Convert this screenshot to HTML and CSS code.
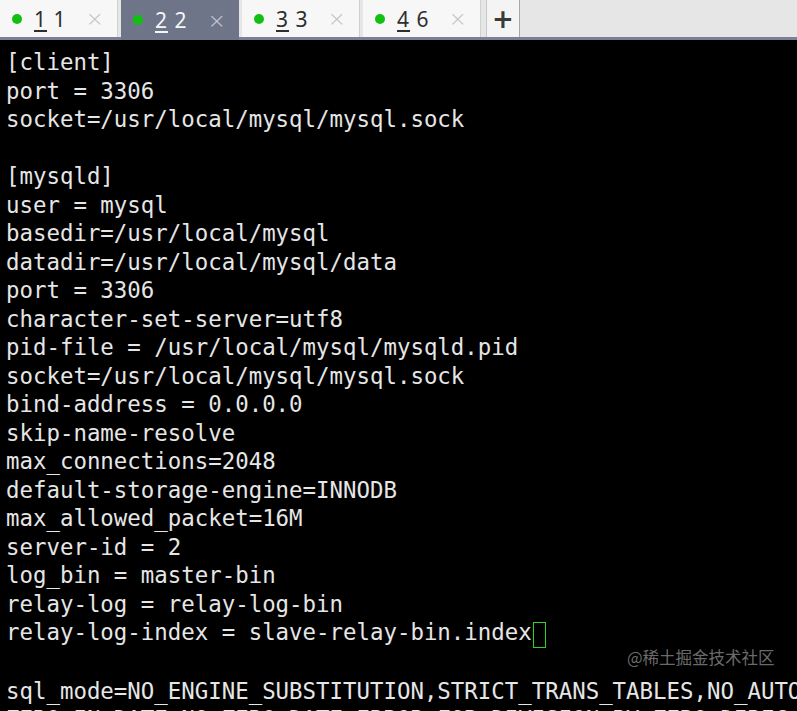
FILE: index.html
```html
<!DOCTYPE html>
<html>
<head>
<meta charset="utf-8">
<link rel="stylesheet" href="styles.css">
</head>
<body>
<div class="tabbar">
  <div class="tab"><span class="dot"></span><span class="label"><u>1</u> 1</span><span class="close">×</span></div>
  <div class="tab active"><span class="dot"></span><span class="label"><u>2</u> 2</span><span class="close">×</span></div>
  <div class="tab"><span class="dot"></span><span class="label"><u>3</u> 3</span><span class="close">×</span></div>
  <div class="tab"><span class="dot"></span><span class="label"><u>4</u> 6</span><span class="close">×</span></div>
  <div class="plus">+</div>
</div>
<div class="term">
<pre class="code">[client]
port = 3306
socket=/usr/local/mysql/mysql.sock

[mysqld]
user = mysql
basedir=/usr/local/mysql
datadir=/usr/local/mysql/data
port = 3306
character-set-server=utf8
pid-file = /usr/local/mysql/mysqld.pid
socket=/usr/local/mysql/mysql.sock
bind-address = 0.0.0.0
skip-name-resolve
max_connections=2048
default-storage-engine=INNODB
max_allowed_packet=16M
server-id = 2
log_bin = master-bin
relay-log = relay-log-bin
relay-log-index = slave-relay-bin.index<span class="cursor"> </span>

sql_mode=NO_ENGINE_SUBSTITUTION,STRICT_TRANS_TABLES,NO_AUTO
ZERO_IN_DATE,NO_ZERO_DATE,ERROR_FOR_DIVISION_BY_ZERO,DIREC</pre>
<div class="watermark">@稀土掘金技术社区</div>
</div>
</body>
</html>
```
FILE: styles.css
```css
html, body {
  margin: 0;
  padding: 0;
  background: #000;
  width: 797px;
  height: 711px;
  overflow: hidden;
}
.tabbar {
  display: flex;
  align-items: stretch;
  height: 37px;
  background: #e6e6e6;
  border-bottom: 3px solid #7b8096;
  font-family: "Noto Sans", "DejaVu Sans", sans-serif;
}
.tab {
  width: 118px;
  box-sizing: border-box;
  margin-right: 3px;
  background: #f7f7f7;
  border-right: 1px solid #d0d0d0;
  display: flex;
  align-items: center;
  padding-left: 12px;
  color: #2e2e2e;
  font-size: 21px;
}
.tab.active {
  background: #6e7589;
  color: #f6f6f6;
  border-right: none;
  margin-bottom: -3px;
}
.dot {
  width: 10px;
  height: 10px;
  border-radius: 50%;
  background: #12c012;
  margin-right: 12px;
}
.label {
  flex: 1;
  letter-spacing: 1px;
}
.label u {
  text-underline-offset: 3px;
  text-decoration-thickness: 1.5px;
}
.close {
  color: #c4c4c4;
  font-family: "DejaVu Sans", sans-serif;
  font-size: 22px;
  margin-right: 13px;
  font-weight: 300;
}
.tab.active .close { color: #c8cad2; }
.plus {
  width: 34px;
  box-sizing: border-box;
  margin-left: 2px;
  background: #f4f4f4;
  border-left: 1px solid #c8c8c8;
  border-right: 1px solid #a8a8a8;
  display: flex;
  align-items: center;
  justify-content: center;
  font-family: "DejaVu Sans", sans-serif;
  font-size: 26px;
  font-weight: bold;
  color: #3a3a3a;
}
.term {
  position: relative;
  height: 671px;
  overflow: hidden;
  padding: 8px 0 0 6px;
  box-sizing: border-box;
}
.code {
  margin: 0;
  font-family: "DejaVu Sans Mono", monospace;
  font-size: 22.4px;
  line-height: 28.5px;
  color: #e6e6e6;
  white-space: pre;
}
.cursor {
  display: inline-block;
  width: 11px;
  height: 24px;
  border: 1px solid #2ad42a;
  vertical-align: -5px;
  margin-left: 1px;
}
.watermark {
  position: absolute;
  left: 627px;
  top: 605px;
  font-family: "Noto Sans CJK SC", sans-serif;
  font-size: 16.5px;
  color: rgba(200, 200, 200, 0.55);
}
```
